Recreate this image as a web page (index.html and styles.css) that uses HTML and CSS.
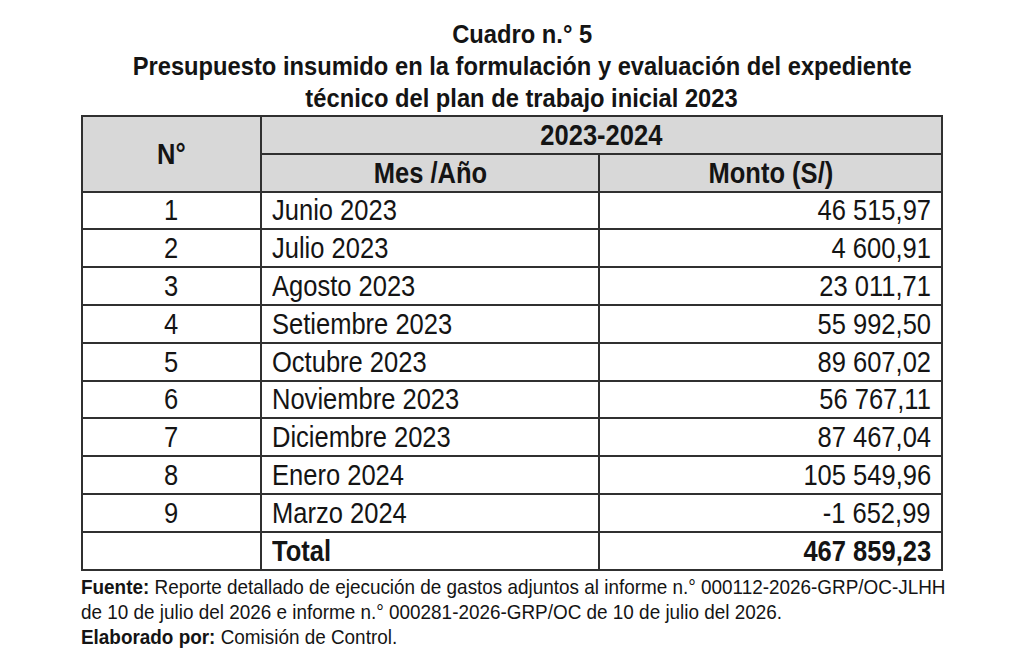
FILE: index.html
```html
<!DOCTYPE html>
<html lang="es">
<head>
<meta charset="utf-8">
<title>Cuadro n.° 5</title>
<link rel="stylesheet" href="styles.css">
</head>
<body>
<div class="page">
  <div class="title">
    <div class="ln"><span class="tx">Cuadro n.° 5</span></div>
    <div class="ln"><span class="tx">Presupuesto insumido en la formulación y evaluación del expediente</span></div>
    <div class="ln"><span class="tx">técnico del plan de trabajo inicial 2023</span></div>
  </div>
  <table class="budget">
    <colgroup>
      <col class="c-num">
      <col class="c-mes">
      <col class="c-monto">
    </colgroup>
    <thead>
      <tr>
        <th rowspan="2"><span class="tx">N°</span></th>
        <th colspan="2"><span class="tx">2023-2024</span></th>
      </tr>
      <tr>
        <th><span class="tx">Mes /Año</span></th>
        <th><span class="tx">Monto (S/)</span></th>
      </tr>
    </thead>
    <tbody>
      <tr><td class="num"><span class="tx">1</span></td><td class="mes"><span class="tx">Junio 2023</span></td><td class="monto"><span class="tx">46 515,97</span></td></tr>
      <tr><td class="num"><span class="tx">2</span></td><td class="mes"><span class="tx">Julio 2023</span></td><td class="monto"><span class="tx">4 600,91</span></td></tr>
      <tr><td class="num"><span class="tx">3</span></td><td class="mes"><span class="tx">Agosto 2023</span></td><td class="monto"><span class="tx">23 011,71</span></td></tr>
      <tr><td class="num"><span class="tx">4</span></td><td class="mes"><span class="tx">Setiembre 2023</span></td><td class="monto"><span class="tx">55 992,50</span></td></tr>
      <tr><td class="num"><span class="tx">5</span></td><td class="mes"><span class="tx">Octubre 2023</span></td><td class="monto"><span class="tx">89 607,02</span></td></tr>
      <tr><td class="num"><span class="tx">6</span></td><td class="mes"><span class="tx">Noviembre 2023</span></td><td class="monto"><span class="tx">56 767,11</span></td></tr>
      <tr><td class="num"><span class="tx">7</span></td><td class="mes"><span class="tx">Diciembre 2023</span></td><td class="monto"><span class="tx">87 467,04</span></td></tr>
      <tr><td class="num"><span class="tx">8</span></td><td class="mes"><span class="tx">Enero 2024</span></td><td class="monto"><span class="tx">105 549,96</span></td></tr>
      <tr><td class="num"><span class="tx">9</span></td><td class="mes"><span class="tx">Marzo 2024</span></td><td class="monto"><span class="tx">-1 652,99</span></td></tr>
      <tr class="total"><td class="num"></td><td class="mes"><span class="tx">Total</span></td><td class="monto"><span class="tx">467 859,23</span></td></tr>
    </tbody>
  </table>
  <div class="notes">
    <div class="ln"><span class="tx"><b>Fuente:</b> Reporte detallado de ejecución de gastos adjuntos al informe n.° 000112-2026-GRP/OC-JLHH</span></div>
    <div class="ln"><span class="tx">de 10 de julio del 2026 e informe n.° 000281-2026-GRP/OC de 10 de julio del 2026.</span></div>
    <div class="ln"><span class="tx"><b>Elaborado por:</b> Comisión de Control.</span></div>
  </div>
</div>
</body>
</html>
```
FILE: styles.css
```css
html, body {
  margin: 0;
  padding: 0;
  background: #ffffff;
  overflow: hidden;
}

body {
  font-family: "Liberation Sans", Arial, sans-serif;
  color: #141414;
}

.tx {
  display: inline-block;
  white-space: nowrap;
}

.page {
  width: 882px;
  margin-left: 81px;
  padding-top: 18px;
}

/* Title */
.title {
  text-align: center;
  font-weight: bold;
  font-size: 26.5px;
  line-height: 32px;
  margin-bottom: 1px;
}

.title .tx {
  transform: scaleX(0.895);
  transform-origin: 50% 50%;
}

/* Table */
.budget {
  width: 860px;
  border-collapse: collapse;
  table-layout: fixed;
  font-size: 29px;
}

.c-num { width: 179px; }
.c-mes { width: 338px; }
.c-monto { width: 343px; }

.budget th,
.budget td {
  border: 2px solid #303030;
  padding: 0;
  height: 35.8px;
  line-height: 34px;
  white-space: nowrap;
}

.budget .tx {
  transform: scaleX(0.88);
}

.budget th {
  background: #d8d8d8;
  font-weight: bold;
  text-align: center;
}

.budget th .tx,
.budget td.num .tx {
  transform-origin: 50% 50%;
}

.budget td.num {
  text-align: center;
}

.budget td.mes {
  text-align: left;
  padding-left: 10px;
}

.budget td.mes .tx {
  transform-origin: 0 50%;
}

.budget td.monto {
  text-align: right;
  padding-right: 10px;
}

.budget td.monto .tx {
  transform-origin: 100% 50%;
}

.budget tr.total td {
  font-weight: bold;
}

/* Notes */
.notes {
  margin-top: 3px;
  font-size: 21px;
  line-height: 25px;
}

.notes .tx {
  transform: scaleX(0.9);
  transform-origin: 0 50%;
}
```
